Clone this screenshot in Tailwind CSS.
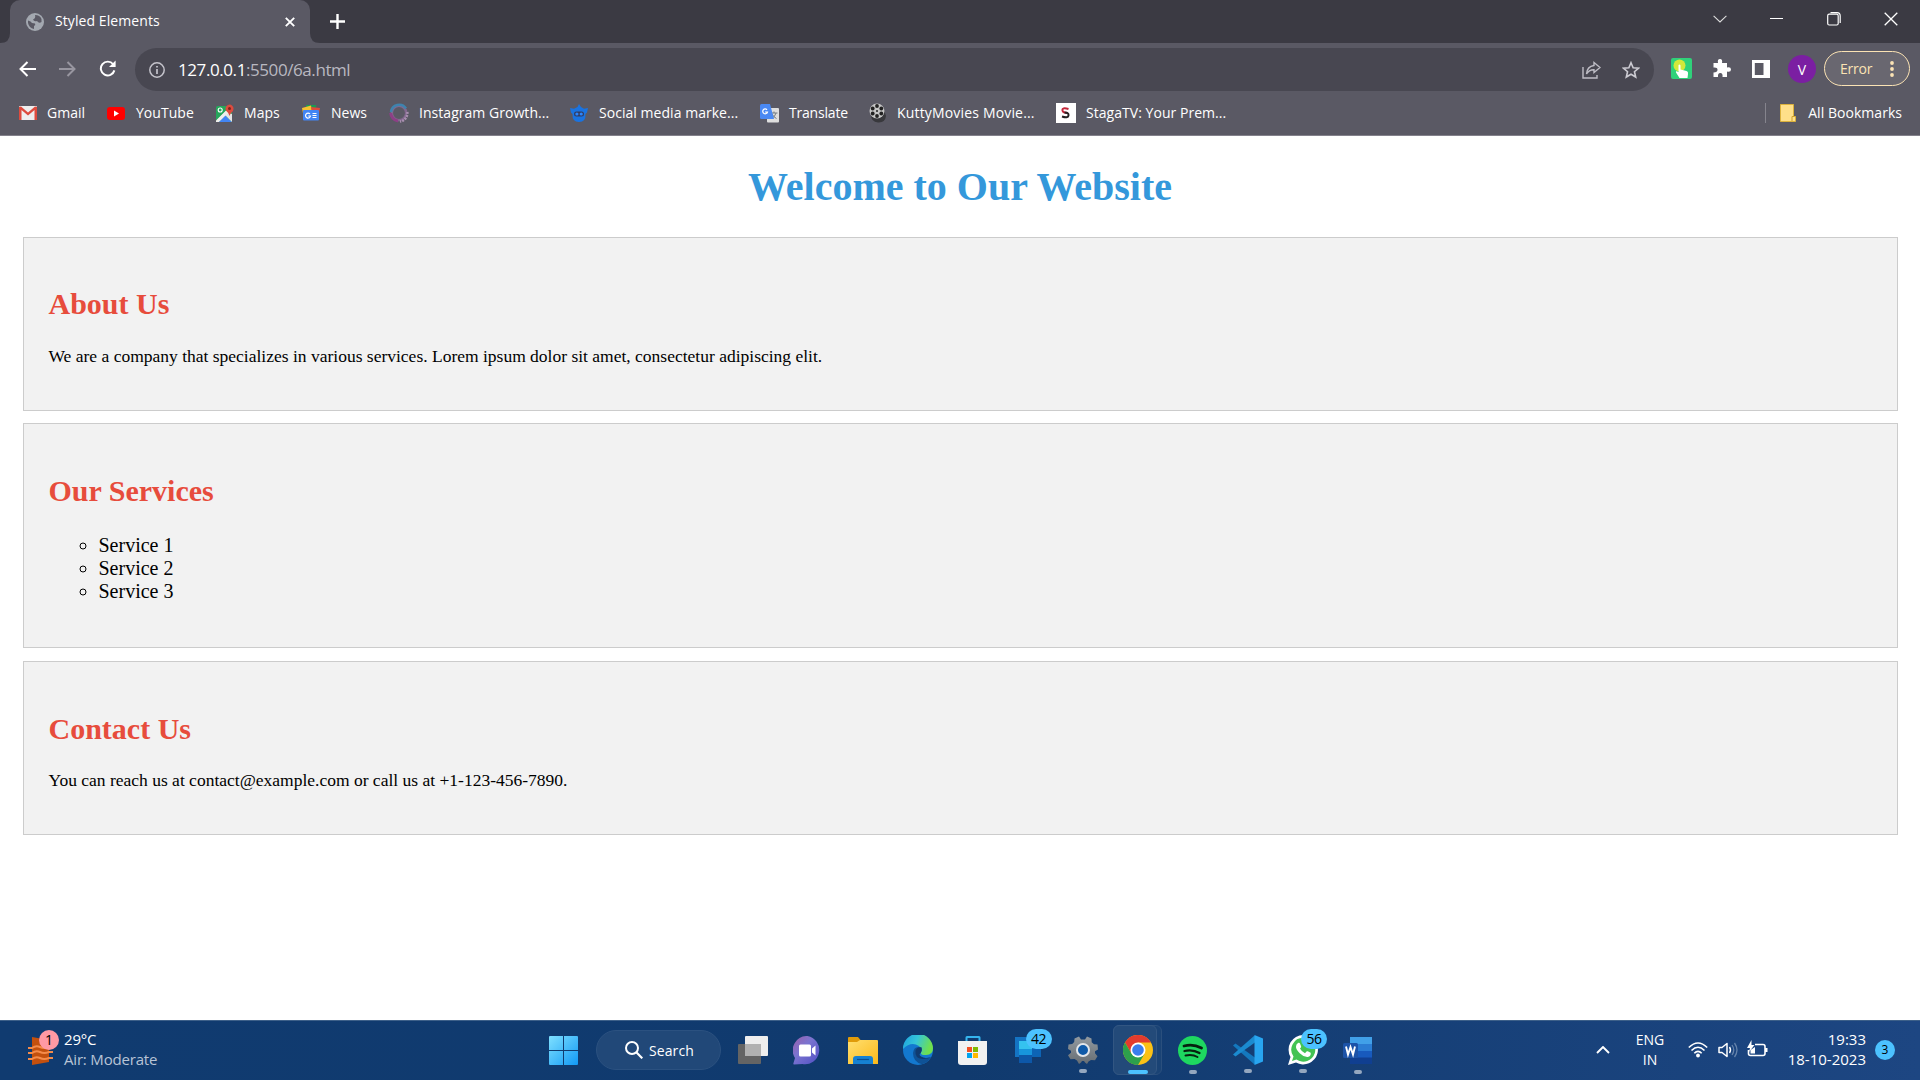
<!DOCTYPE html>
<html lang="en">
<head>
<meta charset="utf-8">
<title>Styled Elements</title>
<script src="https://cdn.jsdelivr.net/npm/@tailwindcss/browser@4"></script>
</head>
<body class="w-[1920px] h-[1080px] overflow-hidden flex flex-col bg-white font-['Open_Sans','Noto_Sans',sans-serif] text-[15px] text-white whitespace-nowrap">

<!-- Tab strip -->
<header class="h-[43px] shrink-0 bg-[#3b3a43] flex items-center">
  <svg class="w-[10px] h-[43px] shrink-0" viewBox="0 0 10 43"><path d="M0 43Q10 43 10 33V43Z" fill="#5a5964"/></svg>
  <div class="w-[300px] h-[43px] shrink-0 rounded-t-[10px] bg-[#5a5964] flex items-center pl-4 pr-[15px]">
    <svg class="size-[18px] shrink-0" viewBox="0 0 18 18"><circle cx="9" cy="9" r="9" fill="#a3a8b0"/><path d="M2 7.500Q5 8 6 10L9 10.500Q10 12 8 13V16Q3 15 2 10ZM9 2Q14 2 15.500 6V9Q13 11 11 8 8 9 7 6.500 10 5 9 2Z" fill="#5a5964"/></svg>
    <span class="ml-[11px] text-[14px] leading-5 tracking-[0.08px] -mt-[1px]">Styled Elements</span>
    <svg class="ml-auto size-[10px]" viewBox="0 0 10 10"><path d="M.8.8l8.4 8.4M9.2.8L.8 9.2" stroke="#fff" stroke-width="1.9"/></svg>
  </div>
  <svg class="w-[10px] h-[43px] shrink-0" viewBox="0 0 10 43"><path d="M10 43Q0 43 0 33V43Z" fill="#5a5964"/></svg>
  <svg class="ml-[10px] size-[15px]" viewBox="0 0 15 15"><path d="M7.5 0v15M0 7.5h15" stroke="#fff" stroke-width="2.4"/></svg>
  <div class="ml-auto flex items-center pb-[6px] pr-[22px]">
    <svg class="w-[14px] h-[8px]" viewBox="0 0 14 8"><path d="M.6.8L7 7l6.400-6.200" fill="none" stroke="#ddd" stroke-width="1.100"/></svg>
    <svg class="ml-[43px] w-[13px] h-[2px]" viewBox="0 0 13 2"><path d="M0 .5h13" stroke="#fff" stroke-width="1"/></svg>
    <svg class="ml-[44px] size-[14px]" viewBox="0 0 14 14"><rect x=".7" y="2.200" width="10.500" height="10.800" rx="1.500" fill="none" stroke="#fff" stroke-width="1.200"/><path d="M3.500.7H10q3.200 0 3.200 3.200V11" fill="none" stroke="#fff" stroke-width="1.200"/></svg>
    <svg class="ml-[43px] size-[14px]" viewBox="0 0 14 14"><path d="M.7.700l12.600 12.600M13.300.7L.7 13.300" stroke="#fff" stroke-width="1.300"/></svg>
  </div>
</header>

<!-- Toolbar -->
<div class="h-[53px] shrink-0 bg-[#5a5964] flex items-center pl-[19px] pr-[10px]">
  <svg class="-mt-[2px] w-[17px] h-4" viewBox="0 0 17 16"><path d="M17 8H1.500M8.500 1L1.500 8l7 7" fill="none" stroke="#fff" stroke-width="2"/></svg>
  <svg class="-mt-[2px] ml-[23px] w-[17px] h-4" viewBox="0 0 17 16"><path d="M0 8h15.500M8.500 1l7 7-7 7" fill="none" stroke="#9896a0" stroke-width="2"/></svg>
  <svg class="-mt-[2px] ml-[23px] size-[17px]" viewBox="0 0 18 18"><path d="M15 4.500A7.300 7.300 0 1 0 16.300 11" fill="none" stroke="#fff" stroke-width="2.100"/><path d="M17.600.5v7h-7z" fill="#fff"/></svg>
  <div class="ml-[19px] w-[1519px] h-[43px] rounded-full bg-[#484751] flex items-center pl-[14px] pr-[14px]">
    <svg class="size-4" viewBox="0 0 16 16"><circle cx="8" cy="8" r="7.200" fill="none" stroke="#c5c4cc" stroke-width="1.500"/><path d="M8 7v5M8 3.900v1.700" stroke="#c5c4cc" stroke-width="1.700"/></svg>
    <p class="ml-[13px] text-[17px] leading-6 tracking-[-0.42px] text-[#b9b8c0]"><span class="text-white">127.0.0.1</span>:5500/6a.html</p>
    <svg class="ml-auto w-[19px] h-[18px]" viewBox="0 0 19 18"><path d="M1 6v11h14v-3M12 1.500l6 5-6 5V8.700Q7 8.500 4.500 13Q5 5.500 12 4.500Z" fill="none" stroke="#bebdc5" stroke-width="1.400"/></svg>
    <svg class="ml-[21px] size-[18px]" viewBox="0 0 18 18"><path d="M9 1.700l2.150 5 5.400.45-4.100 3.550 1.250 5.300L9 13.200 4.300 16l1.250-5.300L1.450 7.150l5.400-.45Z" fill="none" stroke="#cccbd2" stroke-width="1.600"/></svg>
  </div>
  <svg class="-mt-[2px] ml-[17px] size-[21px]" viewBox="0 0 21 21"><rect width="21" height="21" rx="2" fill="#2fd17a"/><circle cx="8.500" cy="7.500" r="6" fill="#d3e83a"/><path d="M7.500 7q1.500-1 2 .5v4l6 1.500q2 .5 1.500 3l-.5 4H8.500L5 14.500q-.5-1.500 1-1.300l1.500 1Z" fill="#fff"/></svg>
  <svg class="-mt-[2px] ml-[20px] size-[19px]" viewBox="0 0 19 19"><path d="M1.500 4H6q-.8-4 2-4t2 4h5v4.500q4-.8 4 2t-4 2V18h-4.500q.5-4-2.200-4T6 18H1.500v-4.500q4 0 4-2.700T1.500 8.500Z" fill="#fff"/></svg>
  <svg class="-mt-[2px] ml-[21px] size-[18px]" viewBox="0 0 18 18"><path fill-rule="evenodd" d="M0 0h18v18H0zM2.800 3v12H11.500V3Z" fill="#fff"/></svg>
  <div class="-mt-[1px] ml-[18px] size-7 rounded-full bg-[#7b1fa2] flex items-center justify-center text-[14px]">V</div>
  <div class="-mt-[2px] ml-2 w-[86px] h-[35px] rounded-full border border-[#fbe3b4] bg-[#696770] flex items-center pl-[15px] pr-[15px] text-[14px] text-[#fbe3b4]">
    <span class="tracking-[-0.2px]">Error</span>
    <svg class="ml-auto w-1 h-4" viewBox="0 0 4 16"><g fill="#fbe3b4"><circle cx="2" cy="2" r="1.900"/><circle cx="2" cy="8" r="1.900"/><circle cx="2" cy="14" r="1.900"/></g></svg>
  </div>
</div>

<!-- Bookmarks bar -->
<nav class="h-[40px] shrink-0 bg-[#5a5964] border-b border-[#83818b] flex items-center pl-[19px] pr-[18px] pb-[5px] text-[14px] leading-5 tracking-[0.04px]">
  <div class="w-[88px] flex items-center gap-[10px]">
    <svg class="w-[18px] h-[14px]" viewBox="0 0 18 14"><rect width="18" height="14" rx="1" fill="#eee"/><path d="M0 14V1l2-.5L9 6.500 16 .5l2 .5v13h-2.500V4L9 9.500 2.500 4v10Z" fill="#dd4b3e"/></svg>
    <span>Gmail</span>
  </div>
  <div class="w-[109px] flex items-center gap-[11px]">
    <svg class="w-[18px] h-[13px]" viewBox="0 0 18 13"><rect width="18" height="13" rx="3" fill="red"/><path d="M7 3.500v6l5-3z" fill="#fff"/></svg>
    <span>YouTube</span>
  </div>
  <div class="w-[86px] flex items-center gap-[10px]">
    <svg class="w-[18px] h-[19px]" viewBox="0 0 18 19"><rect x="0" y="2" width="16" height="16" rx="1.500" fill="#26a65b"/><path d="M0 17L14 3l2 2L3 18H0Z" fill="#fbd04b"/><path d="M0 16.500L10 6.500l3 3L3 18H0Z" fill="#eee"/><path d="M3 18l6.500-6.500L16 18Z" fill="#4285f4"/><path d="M16 18v-8l-3-1-3.500 2.500Z" fill="#e4e4e4"/><circle cx="4.200" cy="6" r="2" fill="none" stroke="#fff" stroke-width="1.100"/><path d="M13.500 12Q13 9 10 6.500A4 4 0 1 1 17.500 5Q17.500 7 15.500 8.500 14 10 13.500 12Z" fill="#dd4b3e"/><circle cx="13.500" cy="4.500" r="1.500" fill="#7c241d"/></svg>
    <span>Maps</span>
  </div>
  <div class="w-[87px] flex items-center gap-[11px]">
    <svg class="w-[18px] h-[16px]" viewBox="0 0 18 16"><path d="M4 0h10v6H4z" fill="#199c53"/><path d="M0 3l9-2.500 1 5-9 3z" fill="#f7c230"/><path d="M9 2l9 1-1 6-7-1z" fill="#e24a3b"/><rect x="1" y="5" width="16" height="10.500" rx="1" fill="#4285f4"/><path d="M8 9A2.500 2.500 0 1 0 8.500 11H6.300M10.500 8.500h4M10.500 10.500h4M10.500 12.500h4" fill="none" stroke="#fff" stroke-width="1.200"/></svg>
    <span>News</span>
  </div>
  <div class="w-[181px] flex items-center gap-[10px]">
    <svg class="size-[20px]" viewBox="0 0 20 20"><g fill="none"><circle cx="10" cy="10" r="7.200" stroke="#83688f" stroke-width="2.500"/><path d="M2 9A8.200 8.200 0 0 1 17 5.500" stroke="#3f83ae" stroke-width="2.500"/><path d="M1.700 10A8.300 8.300 0 0 0 9 18" stroke="#8d3f86" stroke-width="3"/><path d="M18.300 9A8.500 8.500 0 0 1 11 18.500" stroke="#a98fb0" stroke-width="2.500" stroke-dasharray="2 1"/></g></svg>
    <span>Instagram Growth...</span>
  </div>
  <div class="w-[190px] flex items-center gap-[11px]">
    <svg class="size-[18px]" viewBox="0 0 18 18"><path d="M0 4l4 .8 3.500-1.800L9 0l2 3 3 1.800 4-.8-1 4.500-1.500 1.500Q16 18 9 18T2.500 10L1 8.500Z" fill="#1a73e0"/><rect x="4" y="7.500" width="10" height="5" rx="2.500" fill="#343c60"/><circle cx="6.900" cy="10" r="1.600" fill="#2b86ff"/><circle cx="11.200" cy="10" r="1.600" fill="#2b86ff"/></svg>
    <span>Social media marke...</span>
  </div>
  <div class="w-[109px] flex items-center gap-[10px]">
    <svg class="size-[19px]" viewBox="0 0 19 19"><rect x="7" y="4" width="12" height="14.500" rx="1" fill="#dedede"/><path d="M11 9h6.500M14 7.500V9M16 9q-1 4-4.500 5.500M12 10q1.500 3 4.500 4.500" fill="none" stroke="#737b80"/><path d="M1.500 0H10l4 15H1.500Q0 15 0 13.500V1.500Q0 0 1.500 0Z" fill="#4a89f3"/><path d="M7 5.800A2.400 2.400 0 1 0 7.500 8H5" fill="none" stroke="#fff" stroke-width="1.200"/></svg>
    <span class="tracking-[-0.2px]">Translate</span>
  </div>
  <div class="w-[187px] flex items-center gap-[10px]">
    <svg class="w-[18px] h-[20px]" viewBox="0 0 18 20"><path d="M2 12Q2 19 9 19.500T17 13L15 7Z" fill="#38383c"/><circle cx="8" cy="8" r="7.500" fill="#c5c5c5"/><g fill="#222"><circle cx="8" cy="3" r="1.900"/><circle cx="12.300" cy="5.500" r="1.900"/><circle cx="12.300" cy="10.500" r="1.900"/><circle cx="8" cy="13" r="1.900"/><circle cx="3.700" cy="10.500" r="1.900"/><circle cx="3.700" cy="5.500" r="1.900"/><circle cx="8" cy="8" r="1"/></g></svg>
    <span class="tracking-[0.17px]">KuttyMovies Movie...</span>
  </div>
  <div class="flex items-center gap-[10px]">
    <svg class="size-5" viewBox="0 0 20 20"><path d="M0 0h20v20H0z" fill="#fff"/><path d="M12.500 6Q6 4 6.500 7.500 7 10 12 10" fill="none" stroke="#c2263a" stroke-width="2"/><path d="M8.500 9.500q4.500 0 4 3T6 13.500" fill="none" stroke="#222" stroke-width="2"/></svg>
    <span>StagaTV: Your Prem...</span>
  </div>
  <div class="ml-auto w-px h-5 bg-[#85848d]"></div>
  <svg class="ml-[14px] w-4 h-[18px]" viewBox="0 0 16 18"><path d="M.5.500h13v12h2v5H.5z" fill="#ffe08a" stroke="#dcb23c"/><path d="M12 17v-4.500h2" fill="none" stroke="#cfa02a"/></svg>
  <span class="ml-[12px]">All Bookmarks</span>
</nav>

<!-- Page -->
<main class="flex-1 min-h-0 px-[22.5px] text-black font-['Liberation_Serif',serif] text-[17.5px] leading-[20px]">
  <h1 class="mt-[28px] text-center text-[40px] leading-[46px] font-bold text-[#3498db]">Welcome to Our Website</h1>
  <section class="mt-[27px] h-[174px] border border-[#ccc] bg-[#f2f2f2] px-[25px] pt-[49px]">
    <h2 class="text-[30px] leading-[34px] font-bold text-[#e74c3c]">About Us</h2>
    <p class="mt-[25px]">We are a company that specializes in various services. Lorem ipsum dolor sit amet, consectetur adipiscing elit.</p>
  </section>
  <section class="mt-3 h-[225px] border border-[#ccc] bg-[#f2f2f2] px-[25px] pt-[50px]">
    <h2 class="text-[30px] leading-[34px] font-bold text-[#e74c3c]">Our Services</h2>
    <ul class="mt-[26px] pl-[50px] list-[circle] text-[20px] leading-[23px]">
      <li>Service 1</li>
      <li>Service 2</li>
      <li>Service 3</li>
    </ul>
  </section>
  <section class="mt-[13px] h-[174px] border border-[#ccc] bg-[#f2f2f2] px-[25px] pt-[50px]">
    <h2 class="text-[30px] leading-[34px] font-bold text-[#e74c3c]">Contact Us</h2>
    <p class="mt-[24px]">You can reach us at contact@example.com or call us at +1-123-456-7890.</p>
  </section>
</main>

<!-- Taskbar -->
<footer class="h-[60px] shrink-0 border-t border-[#3d6089] bg-linear-to-r from-[#103b70] via-[#103a6e] to-[#1d4682] flex items-center pb-[1px]">
  <div class="w-[536px] flex items-center pl-[28px] pb-[3px]">
    <div class="relative w-[30px] h-[36px]">
      <svg class="w-[25px] h-[36px]" viewBox="0 0 25 36"><path d="M4 6l17 3v22L4 34Z" fill="#c3500e"/><g fill="none" stroke="#f48b4a" stroke-width="2"><path d="M0 17h4q4-3 8-1t9 0h4M0 22h4q4-3 8-1t9 0h4M0 28h4q4-3 8-1t9 0h4"/></g></svg>
      <div class="absolute left-[11px] -top-[1px] size-5 rounded-full bg-[#ff99a4] text-black text-[14px] leading-5 text-center">1</div>
    </div>
    <div class="ml-[6px] text-[15px] leading-5 tracking-[-0.18px]"><div>29°C</div><div class="text-[#b8c4d6]">Air: Moderate</div></div>
  </div>
  <div class="w-[55px] flex justify-center">
    <svg class="size-[29px]" viewBox="0 0 29 29"><defs><linearGradient id="win" x2="1" y2="1" gradientUnits="objectBoundingBox"><stop stop-color="#7fe0ff"/><stop offset="1" stop-color="#1199f5"/></linearGradient></defs><path d="M0 1q0-1 1-1h13v14H0zM15 0h13q1 0 1 1v13H15zM0 15h14v14H1q-1 0-1-1zM15 15h14v13q0 1-1 1H15z" fill="url(#win)"/></svg>
  </div>
  <div class="ml-[5px] mr-[4px] w-[125px] h-10 rounded-full bg-[#214878] border border-[#2b5180] flex items-center pl-[28px]">
    <svg class="size-[18px]" viewBox="0 0 18 18"><circle cx="7" cy="7" r="6" fill="none" stroke="#fff" stroke-width="2"/><path d="M11.300 11.300l6 6" stroke="#fff" stroke-width="2.200"/></svg>
    <span class="ml-[6px] text-[14px] tracking-[0.1px]">Search</span>
  </div>
  <div class="w-[55px] flex justify-center">
    <svg class="w-[30px] h-[28px]" viewBox="0 0 30 28"><rect x="0" y="8" width="23" height="20" rx="1" fill="#646464"/><rect x="7" y="0" width="23" height="20" rx="1" fill="#eee"/><path d="M7 8h16v12H7z" fill="#b1b1b1"/></svg>
  </div>
  <div class="w-[55px] flex justify-center">
    <svg class="size-[29px]" viewBox="0 0 29 29"><defs><linearGradient id="chat" x1="0" y1="0" x2="1" y2="1"><stop stop-color="#9a5ea8"/><stop offset=".4" stop-color="#7b74d0"/><stop offset="1" stop-color="#4f4fc4"/></linearGradient></defs><path d="M14.500 0a14.200 14.200 0 1 1-5 28L1 28.500q-1 0-.5-1.500l1.500-5A14.300 14.300 0 0 1 14.500 0Z" fill="url(#chat)"/><rect x="6" y="8.500" width="12" height="12" rx="1.500" fill="#fff"/><path d="M19 12.500l3.500-3v10l-3.500-3z" fill="#fff"/></svg>
  </div>
  <div class="w-[55px] flex justify-center">
    <svg class="w-[30px] h-[27px]" viewBox="0 0 30 27"><defs><linearGradient id="fold" x2="1" y2="1"><stop stop-color="#ffdf70"/><stop offset="1" stop-color="#fbb91a"/></linearGradient></defs><path d="M0 1q0-1 1-1h9l3 3.500V8H0z" fill="#e09b0a"/><path d="M0 5h9l3-2h17q1 0 1 1v23H0z" fill="url(#fold)"/><path d="M5 27v-5q0-3 3-3h14q3 0 3 3v5z" fill="#1681d2"/><path d="M9 22.500h12" stroke="#0b4f93" stroke-width="1.200"/></svg>
  </div>
  <div class="w-[55px] flex justify-center">
    <svg class="size-[30px]" viewBox="0 0 30 30"><defs><linearGradient id="edge" x2="1" y2=".3"><stop stop-color="#1b9fe0"/><stop offset=".5" stop-color="#35c6d8"/><stop offset="1" stop-color="#6fe04e"/></linearGradient></defs><circle cx="15" cy="15" r="15" fill="#1378cf"/><path d="M0 14A15 15 0 0 1 30 13.500Q30 20 23 20 17 20 18 17.500 19.500 14 16 11 8 6 0 14Z" fill="url(#edge)"/><path d="M18.500 12.500Q11 10 10 18q0 9 9 11.300 6-1.800 9-7.300-6 2.500-10 .5T18 17.500q1.500-3 .5-5Z" fill="#0f5296"/><path d="M18.500 12.500q-4-1-6 3-1 8 7 8.500 5 .5 8.500-2-6 2-9.500-.2T17.700 18q1.500-3 .8-5.500Z" fill="#103b70"/></svg>
  </div>
  <div class="w-[55px] flex justify-center">
    <svg class="w-[29px] h-[29px]" viewBox="0 0 29 29"><path d="M8.500 6V1.500Q8.500 1 9 1h12q.5 0 .5.500V6" fill="none" stroke="#35b5ee" stroke-width="2"/><path d="M0 5h29v21q0 3-3 3H3q-3 0-3-3z" fill="#f1f1f1"/><path d="M9 11h5v5H9z" fill="#f25022"/><path d="M15 11h5v5h-5z" fill="#7fba00"/><path d="M9 17h5v5H9z" fill="#00a4ef"/><path d="M15 17h5v5h-5z" fill="#ffb900"/></svg>
  </div>
  <div class="w-[55px] flex justify-center">
    <div class="relative">
      <svg class="w-[28px] h-[28px]" viewBox="0 0 28 28"><path d="M1 1h14v20H1z" fill="#1474c4"/><path d="M12 6h15v15H12z" fill="#0d64b5"/><path d="M5 5h13v9H5z" fill="#35c2ef"/><path d="M5 13h13v7H5z" fill="#1795dc"/><path d="M5 19h13v8H5z" fill="#0d57a8"/></svg>
      <div class="absolute left-[12px] -top-[7px] w-[26px] h-5 rounded-full bg-[#4cc2ff] text-black text-[14px] leading-5 text-center tracking-[-0.5px]">42</div>
    </div>
  </div>
  <div class="relative w-[55px] flex justify-center">
    <svg class="size-[30px]" viewBox="0 0 30 30"><defs><linearGradient id="gear" x2="0" y2="1"><stop stop-color="#939a9f"/><stop offset="1" stop-color="#666d73"/></linearGradient></defs><path d="M11 1.500l2 3h4l2-3 4.500 2 .2 3.800 2.300 2 3.500.2.500 5-3 1.800v2l2.500 3-2.500 4-4-.3-2.500 1.500L19 29l-2-1.500-1-1.500h-2l-1 1.500L11 29l-2-3.500L6.500 24l-4 .300L0 20.300l3-2.500v-2L0 14l.5-4.500L4.200 9l2-2 .3-3.500Z" fill="url(#gear)"/><circle cx="15" cy="15" r="6" fill="#0f5aa8" stroke="#e2e6ea" stroke-width="2"/></svg>
    <i class="absolute left-[24px] top-[34px] w-2 h-1 rounded-full bg-[#94a7bf]"></i>
  </div>
  <div class="relative w-[55px] h-[50px] flex items-center justify-center">
    <div class="absolute left-[3px] top-0 w-[49px] h-[50px] rounded-md border border-[#2a4f7d] bg-[#1a4375]"></div>
    <div class="absolute left-[3px] top-0 w-[44px] h-[50px] rounded-md border border-[#325682] bg-[#234a79]"></div>
    <svg class="relative size-[30px]" viewBox="0 0 30 30"><circle cx="15" cy="15" r="15" fill="#fbc116"/><path d="M2 7.500A15 15 0 0 1 28 7.500H15L8.500 18.800Z" fill="#e33b2e"/><path d="M2 7.500A15 15 0 0 0 15 30L21.500 18.700Q18 23 13 21.500 9.500 20.500 8.500 18.700Z" fill="#2da04c"/><circle cx="15" cy="15" r="7.500" fill="#fff"/><circle cx="15" cy="15" r="5.800" fill="#3b7ded"/></svg>
    <i class="absolute left-[18px] top-[45px] w-5 h-1 rounded-full bg-[#4cc2ff]"></i>
  </div>
  <div class="relative w-[55px] flex justify-center">
    <svg class="size-[29px]" viewBox="0 0 29 29"><circle cx="14.500" cy="14.500" r="14.500" fill="#1ed760"/><g fill="none" stroke="#06210f" stroke-linecap="round"><path d="M6 10q9-2.500 17.500 2" stroke-width="2.800"/><path d="M6.500 15q8-2 15 2" stroke-width="2.300"/><path d="M7.500 19.500q7-1.500 12 1.500" stroke-width="1.900"/></g></svg>
    <i class="absolute left-[24px] top-[34px] w-2 h-1 rounded-full bg-[#94a7bf]"></i>
  </div>
  <div class="relative w-[55px] flex justify-center">
    <svg class="size-[30px]" viewBox="0 0 30 30"><path d="M0 10.500l2.500-2L24 24l-2.500 5.500Z" fill="#1478be"/><path d="M0 19.500l2.500 2L24 6 21.500.500Z" fill="#1b8bd0"/><path d="M21.500 0L30 3.500v23L21.500 30Z" fill="#28a5f0"/></svg>
    <i class="absolute left-[24px] top-[34px] w-2 h-1 rounded-full bg-[#94a7bf]"></i>
  </div>
  <div class="relative w-[55px] flex justify-center">
    <svg class="size-[30px]" viewBox="0 0 30 30"><path d="M15.300 0A14.700 14.700 0 1 1 8 27.500L0 30l2.500-8A14.700 14.700 0 0 1 15.300 0Z" fill="#fff"/><path d="M15.300 2.700A12 12 0 1 1 8.500 24.600L4 26l1.500-4.400A12 12 0 0 1 15.300 2.700Z" fill="#43c353"/><path d="M10 8q1.500-.5 2 .5l1.200 3q0 1-1.200 2 1.500 3.200 5 4.700l1.500-1.700q.5-.5 1.200-.2l3 1.500q.6 3.500-3 4.200-4 .3-8-3.700T8 11.500Q8 9 10 8Z" fill="#fff"/></svg>
    <div class="absolute left-[26px] -top-[6px] w-[26px] h-5 rounded-full bg-[#4cc2ff] text-black text-[14px] leading-5 text-center tracking-[-0.5px]">56</div>
    <i class="absolute left-[24px] top-[34px] w-2 h-1 rounded-full bg-[#94a7bf]"></i>
  </div>
  <div class="relative w-[55px] flex justify-center">
    <svg class="w-[29px] h-[27px]" viewBox="0 0 29 27"><path d="M7 0h22v7H7z" fill="#41a0e8"/><path d="M7 7h22v7H7z" fill="#2b7cd3"/><path d="M7 14h22v7H7z" fill="#185abd"/><path d="M7 20.500h22V27H7z" fill="#103f91"/><rect y="6" width="15" height="15" rx="1.500" fill="#1c53a8"/><path d="M3 9.500l2 8 2.500-7.500L10 17.500l2-8" fill="none" stroke="#fff" stroke-width="1.900"/></svg>
    <i class="absolute left-[24px] top-[33px] w-2 h-1 rounded-full bg-[#94a7bf]"></i>
  </div>

  <div class="ml-auto pr-[25px] flex items-center">
    <svg class="w-[14px] h-[8px]" viewBox="0 0 14 8"><path d="M1 7l6-6 6 6" fill="none" stroke="#fff" stroke-width="1.900"/></svg>
    <div class="ml-[20px] w-10 text-center text-[14px] leading-5">ENG<br>IN</div>
    <svg class="ml-[18px] w-5 h-[16px]" viewBox="0 0 20 16"><g fill="none" stroke="#fff" stroke-width="1.600"><path d="M.8 5.500Q10-3.500 19.200 5.500M3.500 8.500Q10 2 16.500 8.500M6.300 11.300Q10 7.500 13.700 11.300"/></g><circle cx="10" cy="13.500" r="1.900" fill="#fff"/></svg>
    <svg class="ml-[10px] w-5 h-4" viewBox="0 0 20 16"><path d="M1 5.500h3L9 1.500v13L4 10.500H1Z" fill="none" stroke="#fff" stroke-width="1.500" stroke-linejoin="round"/><path d="M11.500 5q2 3 0 6" fill="none" stroke="#fff" stroke-width="1.400"/><path d="M14 3q3.500 5 0 10M16.500 1q5 7 0 14" fill="none" stroke="#6583ab" stroke-width="1.300"/></svg>
    <svg class="-mt-[3px] ml-[9px] w-[21px] h-[18px]" viewBox="0 0 21 18"><path d="M8 4.500h8q2 0 2 2v7q0 2-2 2H3.500q-2 0-2-2V10" fill="none" stroke="#fff" stroke-width="1.600"/><path d="M18 8h2.500v4H18zM3.500 13.500V10L8 7v6.500z" fill="#fff"/><path d="M4.500 0L0 8h3l-1 4 5.500-7H4.500Z" fill="#fff"/></svg>
    <div class="w-[98px] pb-[3px] text-right text-[15px] leading-5">19:33<br>18-10-2023</div>
    <div class="ml-[9px] size-5 rounded-full bg-[#4cc2ff] text-black text-[12px] leading-5 text-center">3</div>
  </div>
</footer>
</body>
</html>
